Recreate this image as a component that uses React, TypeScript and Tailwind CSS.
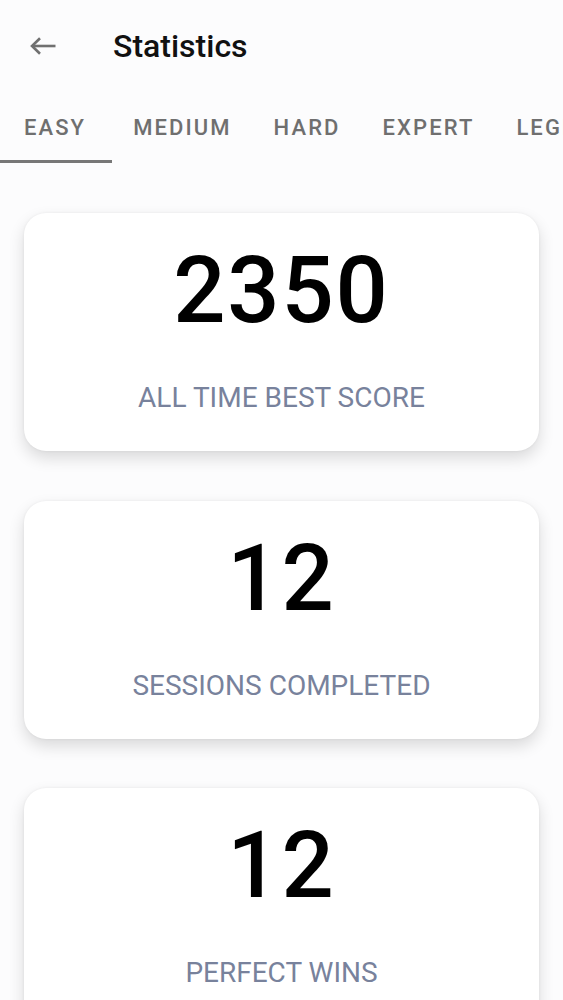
const tabs = [
  { label: 'EASY', active: true },
  { label: 'MEDIUM' },
  { label: 'HARD' },
  { label: 'EXPERT' },
  { label: 'LEGEND' },
];

const stats = [
  { value: '2350', label: 'ALL TIME BEST SCORE' },
  { value: '12', label: 'SESSIONS COMPLETED' },
  { value: '12', label: 'PERFECT WINS' },
];

function BackArrow() {
  return (
    <svg viewBox="0 0 26 18" className="h-[18px] w-[26px]" fill="none" stroke="currentColor" strokeWidth={2.6}>
      <path d="M2 9H25.5" />
      <path d="M10 1.2L2 9l8 7.8" />
    </svg>
  );
}

export default function App() {
  return (
    <div className="h-[1000px] w-[563px] overflow-hidden bg-[#fcfcfd] font-['Roboto',sans-serif]">
      <header className="flex h-[92px] items-center">
        <button className="ml-[30px] flex items-center text-[#707070]">
          <BackArrow />
        </button>
        <h1 className="ml-[57px] text-[32px] font-medium leading-none text-[#111]">Statistics</h1>
      </header>

      <nav className="flex h-[71px] flex-nowrap whitespace-nowrap">
        {tabs.map((tab) => (
          <div
            key={tab.label}
            className={`relative flex shrink-0 items-center ${tab.active ? 'pl-[24px] pr-[26px]' : 'px-[21px]'}`}
          >
            <span className="text-[22px] font-medium tracking-[0.095em] text-[#6f6f6f]">{tab.label}</span>
            {tab.active && <span className="absolute bottom-0 left-0 h-[3px] w-full bg-[#777]" />}
          </div>
        ))}
      </nav>

      <main className="flex flex-col gap-[49.5px] px-[24px] pt-[50px]">
        {stats.map((s) => (
          <div
            key={s.label}
            className="flex flex-col items-center rounded-[22px] bg-white pt-[32px] pb-[37px] shadow-[0_7px_16px_rgba(0,0,0,0.14),0_0_3px_rgba(0,0,0,0.06)]"
          >
            <div className="text-[92px] font-medium leading-[92px] tracking-[0.02em] text-black">{s.value}</div>
            <div className="mt-[45px] text-[28px] leading-[32px] text-[#78829c]">{s.label}</div>
          </div>
        ))}
      </main>
    </div>
  );
}
